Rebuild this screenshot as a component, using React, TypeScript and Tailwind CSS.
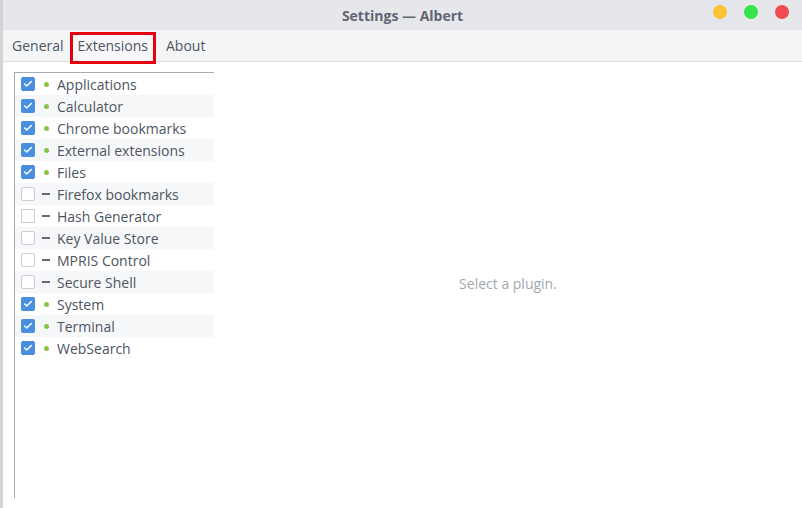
import { Check } from "lucide-react";

const plugins: { name: string; enabled: boolean }[] = [
  { name: "Applications", enabled: true },
  { name: "Calculator", enabled: true },
  { name: "Chrome bookmarks", enabled: true },
  { name: "External extensions", enabled: true },
  { name: "Files", enabled: true },
  { name: "Firefox bookmarks", enabled: false },
  { name: "Hash Generator", enabled: false },
  { name: "Key Value Store", enabled: false },
  { name: "MPRIS Control", enabled: false },
  { name: "Secure Shell", enabled: false },
  { name: "System", enabled: true },
  { name: "Terminal", enabled: true },
  { name: "WebSearch", enabled: true },
];

function PluginRow({ name, enabled, odd }: { name: string; enabled: boolean; odd: boolean }) {
  return (
    <div className={`flex h-[22px] items-center ${odd ? "bg-[#f6f7f8]" : "bg-white"}`}>
      {enabled ? (
        <div className="ml-[6px] flex h-[14px] w-[14px] items-center justify-center rounded-[2px] bg-[#4a8fdf]">
          <Check size={10} strokeWidth={3.5} className="text-white" />
        </div>
      ) : (
        <div className="ml-[6px] h-[14px] w-[14px] rounded-[2px] border border-[#c9ced6] bg-white" />
      )}
      <div className="flex w-[22px] items-center justify-center">
        {enabled ? (
          <div className="h-[5px] w-[5px] rounded-full bg-[#8bc34a]" />
        ) : (
          <div className="h-[2px] w-[8px] bg-[#666a70]" />
        )}
      </div>
      <span className="text-[14px] text-[#4d5562]">{name}</span>
    </div>
  );
}

export default function App() {
  return (
    <div className="flex h-[508px] w-[802px] overflow-hidden font-['Open_Sans',sans-serif]">
      {/* desktop edge behind the window */}
      <div className="w-[3px] bg-[#d2d3d5]" />

      <div className="flex flex-1 flex-col bg-white">
        {/* Title bar */}
        <div className="relative flex h-[30px] items-center justify-center bg-[#e6e7ea]">
          <span className="text-[14px] font-bold text-[#5f6672]">Settings — Albert</span>
          <div className="absolute right-[13px] top-[5px] flex gap-[17px]">
            <div className="h-[14px] w-[14px] rounded-full bg-[#f9c237]" />
            <div className="h-[14px] w-[14px] rounded-full bg-[#37e24a]" />
            <div className="h-[14px] w-[14px] rounded-full bg-[#f04b55]" />
          </div>
        </div>

        {/* Tabs */}
        <div className="flex h-[32px] items-start border-b border-[#dcdde0] bg-[#f4f5f7] pl-[9px]">
          <div className="flex h-[31px] items-center pr-[6px] text-[14px] text-[#4d5562]">General</div>
          <div className="relative z-10 mt-[2px] h-[32px] border-[3px] border-[#e3000f] bg-[#f7f7f9] px-[5px] pt-[1px] text-[14px] leading-[20px] text-[#4d5562]">
            Extensions
          </div>
          <div className="flex h-[31px] items-center pl-[10px] text-[14px] text-[#4d5562]">About</div>
        </div>

        {/* Content */}
        <div className="flex flex-1 pl-[11px] pt-[10px] pb-[10px]">
          <div className="w-[200px] border-l border-t border-[#a7adb4]">
            {plugins.map((p, i) => (
              <PluginRow key={p.name} name={p.name} enabled={p.enabled} odd={i % 2 === 1} />
            ))}
          </div>
          <div className="flex flex-1 items-center justify-center pb-[4px]">
            <span className="text-[14px] text-[#a2a7ae]">Select a plugin.</span>
          </div>
        </div>
      </div>
    </div>
  );
}
